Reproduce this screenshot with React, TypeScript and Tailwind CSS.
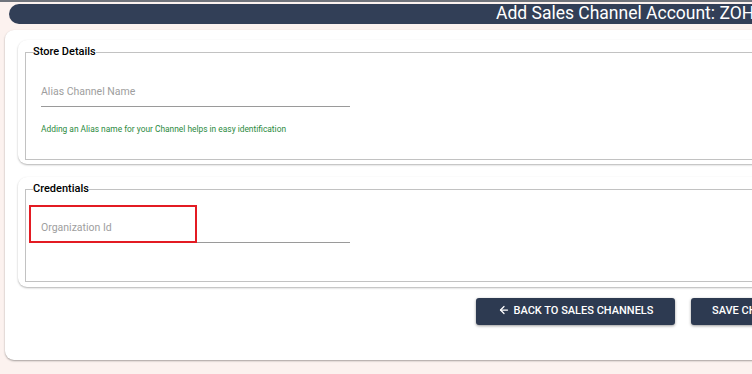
import { ArrowLeft } from "lucide-react";

export default function App() {
	return (
		<div className="w-[752px] h-[374px] overflow-hidden bg-[#fcf2ef] font-['Roboto',sans-serif]">
			<div className="w-[900px]">
				{/* top strip */}
				<div className="h-[2px] bg-[#70747c]" />

				{/* Title bar */}
				<div className="mt-[2px] ml-[9px] h-[20px] rounded-l-[10px] bg-[#323f57] pl-[487px] flex items-center">
					<h1 className="text-[17.5px] leading-none text-white whitespace-nowrap">
						Add Sales Channel Account: ZOHO
					</h1>
				</div>

				{/* Main card */}
				<div className="mt-[6px] ml-[5px] rounded-l-[9px] bg-white shadow-[0_1px_2px_rgba(0,0,0,0.35)] pt-[10px] pb-[35px]">
					{/* Store Details */}
					<section className="ml-[13px] rounded-l-[9px] bg-white shadow-[0_1px_2px_rgba(0,0,0,0.3)] pl-[7px] pt-[5px] pb-[4px]">
						<fieldset className="h-[115px] border border-r-0 border-[#c2c2c2] px-[7px]">
							<legend className="text-[11px] font-medium text-black leading-[14px]">Store Details</legend>
							<div className="pl-2">
								<div className="mt-[21px] w-[309px] h-[27px] border-b border-[#9a9a9a] flex items-center pb-[2px]">
									<span className="text-[10.5px] text-[#9e9e9e]">Alias Channel Name</span>
								</div>
								<p className="mt-[16px] text-[8.4px] text-[#2b8a3e]">
									Adding an Alias name for your Channel helps in easy identification
								</p>
							</div>
						</fieldset>
					</section>

					{/* Credentials */}
					<section className="mt-[13px] ml-[13px] rounded-l-[9px] bg-white shadow-[0_1px_2px_rgba(0,0,0,0.3)] pl-[7px] pt-[5px] pb-[5px]">
						<fieldset className="h-[100px] border border-r-0 border-[#c2c2c2] px-[7px]">
							<legend className="text-[11px] font-medium text-black leading-[14px]">Credentials</legend>
							<div className="pl-2">
								<div className="relative mt-[20px] w-[309px] h-[27px] border-b border-[#9a9a9a] flex items-center pb-[2px]">
									<span className="text-[10.5px] text-[#9e9e9e]">Organization Id</span>
									<div className="absolute left-[-12px] top-[-11px] w-[168px] h-[38px] border-[2.5px] border-[#e31b23]" />
								</div>
							</div>
						</fieldset>
					</section>

					{/* Actions */}
					<div className="mt-[11px] pl-[471px] flex gap-4">
						<button className="h-[27px] w-[199px] rounded-[3px] bg-[#2d3a51] shadow-[0_1px_3px_rgba(0,0,0,0.4)] flex items-center justify-center gap-1 text-white text-[11px] font-medium">
							<ArrowLeft size={12} strokeWidth={2.5} className="-mt-[3px]" />
							BACK TO SALES CHANNELS
						</button>
						<button className="h-[27px] w-[140px] rounded-[3px] bg-[#2d3a51] shadow-[0_1px_3px_rgba(0,0,0,0.4)] px-[21px] flex items-center text-white text-[11px] font-medium">
							SAVE CHANGES
						</button>
					</div>
				</div>
			</div>
		</div>
	);
}
